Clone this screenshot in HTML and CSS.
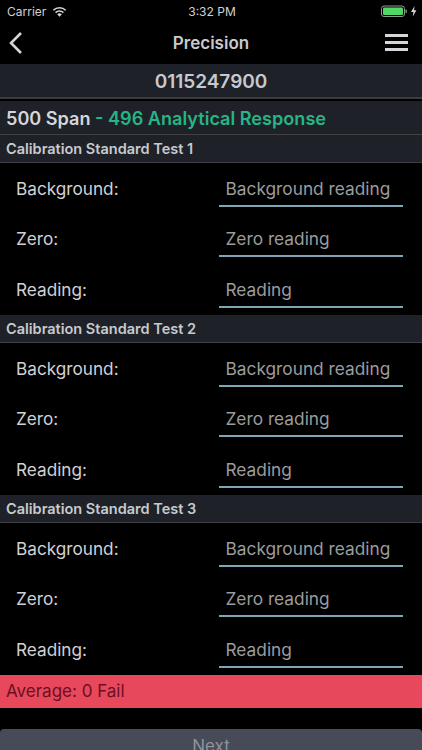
FILE: index.html
```html
<!DOCTYPE html>
<html lang="en">
<head>
<meta charset="utf-8">
<title>Precision</title>
<link rel="stylesheet" href="styles.css">
</head>
<body>
<div class="status">
  <div class="status-left">
    <span>Carrier</span>
    <svg class="wifi" width="15" height="11" viewBox="0 0 15 11"><path d="M7.5 10.8 L5.2 8.3 A3.4 3.4 0 0 1 9.8 8.3 Z" fill="#d6d6d8"/><path d="M3.6 6.6 A5.6 5.6 0 0 1 11.4 6.6" fill="none" stroke="#d6d6d8" stroke-width="1.6"/><path d="M1.3 4.2 A8.9 8.9 0 0 1 13.7 4.2" fill="none" stroke="#d6d6d8" stroke-width="1.6"/></svg>
  </div>
  <span class="status-time">3:32 PM</span>
  <div class="status-right">
    <svg width="36" height="12" viewBox="0 0 36 12"><rect x="0.5" y="1" width="23" height="10.5" rx="2.5" fill="none" stroke="#8f9a8f"/><rect x="2" y="2.5" width="20" height="7.5" rx="1.2" fill="#4fd964"/><rect x="24.5" y="4.5" width="1.3" height="3.5" fill="#8f9a8f"/><path d="M33.6 1 L30 7 H32.4 L31.8 11.5 L35.4 5.3 H33 Z" fill="#d6d6d8"/></svg>
  </div>
</div>
<header class="nav">
  <svg class="back" width="16" height="24" viewBox="0 0 16 24"><path d="M13 2 L3 12 L13 22" fill="none" stroke="#d4d5d8" stroke-width="2.6"/></svg>
  <h1 class="nav-title">Precision</h1>
  <div class="burger"><i></i><i></i><i></i></div>
</header>
<div class="serial">0115247900</div>
<div class="span-row">500 Span <span class="accent">- 496 Analytical Response</span></div>

<section>
  <h2 class="test-head">Calibration Standard Test 1</h2>
  <div class="field"><label class="field-label">Background:</label><div class="field-input">Background reading</div></div>
  <div class="field"><label class="field-label">Zero:</label><div class="field-input">Zero reading</div></div>
  <div class="field"><label class="field-label">Reading:</label><div class="field-input">Reading</div></div>
</section>
<section>
  <h2 class="test-head">Calibration Standard Test 2</h2>
  <div class="field"><label class="field-label">Background:</label><div class="field-input">Background reading</div></div>
  <div class="field"><label class="field-label">Zero:</label><div class="field-input">Zero reading</div></div>
  <div class="field"><label class="field-label">Reading:</label><div class="field-input">Reading</div></div>
</section>
<section>
  <h2 class="test-head">Calibration Standard Test 3</h2>
  <div class="field"><label class="field-label">Background:</label><div class="field-input">Background reading</div></div>
  <div class="field"><label class="field-label">Zero:</label><div class="field-input">Zero reading</div></div>
  <div class="field"><label class="field-label">Reading:</label><div class="field-input">Reading</div></div>
</section>

<div class="average">Average: 0 Fail</div>
<div class="next">Next</div>
</body>
</html>
```
FILE: styles.css
```css
* { box-sizing: border-box; }
html, body { margin: 0; padding: 0; }
body {
  width: 422px;
  height: 750px;
  overflow: hidden;
  background: #000;
  color: #d5d6d9;
  font-family: Inter, "Liberation Sans", sans-serif;
}
.status {
  height: 22px;
  padding: 0 5px 0 7px;
  display: grid;
  grid-template-columns: 1fr auto 1fr;
  align-items: center;
  font-size: 12px;
  color: #d0d1d4;
}
.status-left { display: flex; align-items: center; gap: 6px; }
.status-right { display: flex; justify-content: flex-end; }
.nav {
  height: 42px;
  padding: 0 14px;
  display: grid;
  grid-template-columns: 1fr auto 1fr;
  align-items: center;
}
.back { margin-left: -6px; }
.nav-title { margin: 0; font-size: 17px; font-weight: 600; color: #c9cacd; }
.burger { width: 23px; justify-self: end; display: flex; flex-direction: column; gap: 4px; margin-top: -2px; }
.burger i { display: block; height: 3px; background: #d4d5d8; }
.serial {
  height: 35px;
  background: #1e2228;
  border-bottom: 2px solid #3a3c40;
  text-align: center;
  font-size: 19px;
  font-weight: 600;
  line-height: 36px;
  color: #c8c9cd;
}
.span-row {
  margin-top: 2px;
  height: 34px;
  padding-left: 6px;
  background: #1e2228;
  border-bottom: 1px solid #3f4145;
  font-size: 18.1px;
  font-weight: 600;
  line-height: 34px;
  color: #d5d6d9;
}
.accent { color: #28b485; }
.test-head {
  margin: 0;
  height: 28px;
  padding-left: 6px;
  background: #1e2228;
  border-bottom: 1px solid #3f4145;
  font-size: 14.5px;
  font-weight: 600;
  line-height: 27px;
  color: #c9cacd;
}
.field {
  height: 50.67px;
  padding: 0 19px 0 16px;
  display: flex;
  align-items: center;
  justify-content: space-between;
}
.field-label { font-size: 17.2px; color: #d0d1d4; }
.field-input {
  width: 184px;
  height: 36px;
  padding-left: 6.5px;
  border-bottom: 2px solid #7fa6b4;
  font-size: 17.3px;
  line-height: 36px;
  color: #9b9c9e;
  margin-top: 1px;
}
.average {
  height: 33px;
  padding-left: 6px;
  background: #e8485c;
  font-size: 17px;
  line-height: 33px;
  color: #6e0f1e;
}
.next {
  margin-top: 21px;
  height: 40px;
  background: #464b57;
  border-radius: 4px 4px 0 0;
  text-align: center;
  font-size: 17px;
  line-height: 34px;
  color: #8f939b;
}
```
